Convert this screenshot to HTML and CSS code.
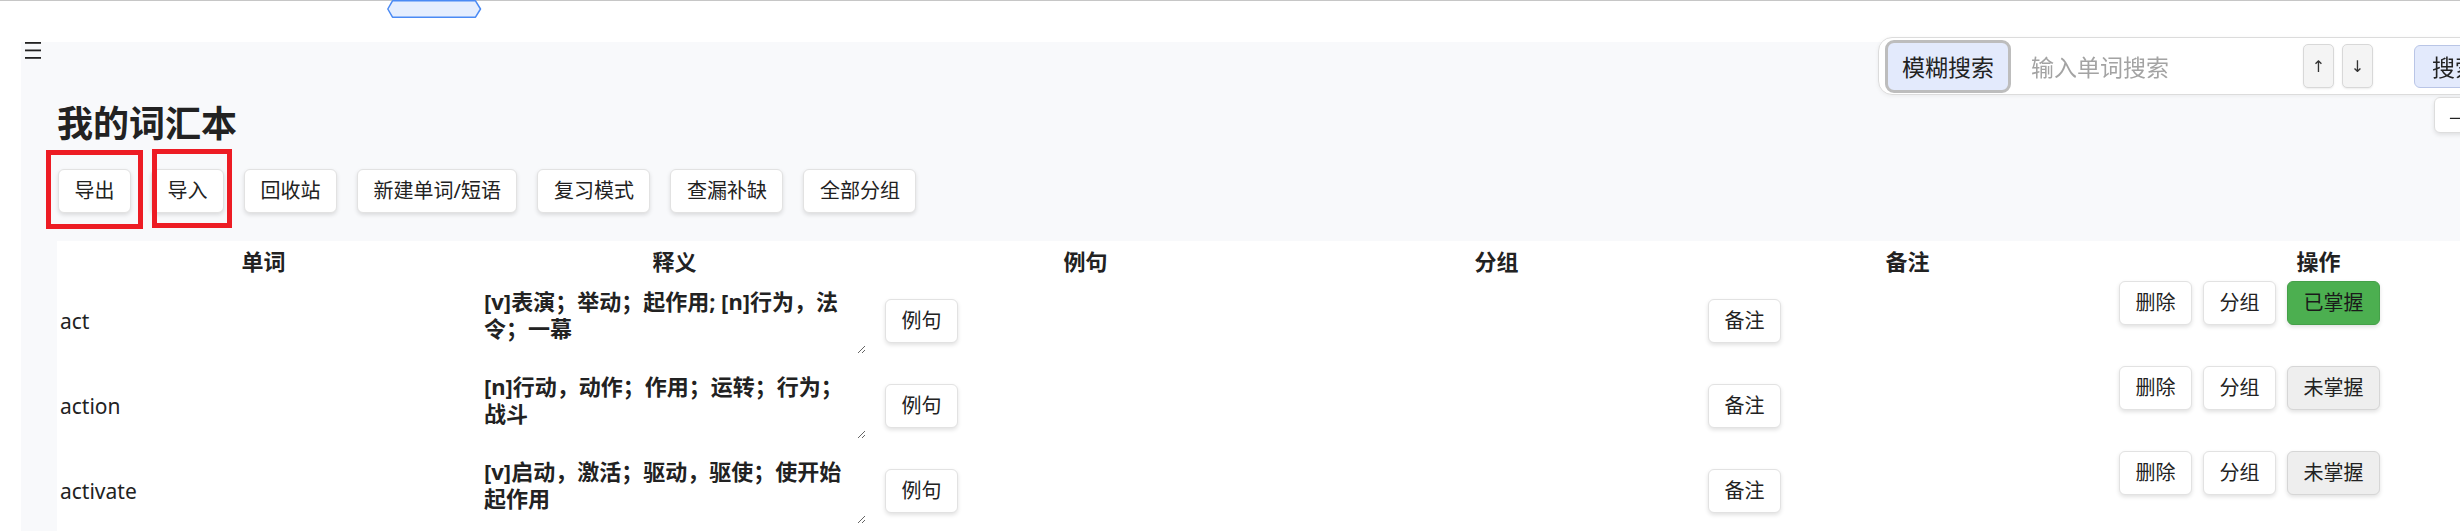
FILE: index.html
```html
<!DOCTYPE html>
<html lang="zh-CN">
<head>
<meta charset="utf-8">
<title>我的词汇本</title>
<link rel="stylesheet" href="styles.css">
</head>
<body>
<div class="topline"></div>
<svg class="drag-tab" width="95" height="19" viewBox="0 0 95 19">
  <polygon points="5.5,0.8 88.5,0.8 93.5,9 88.5,17.2 5.5,17.2 0.8,9" fill="#e5eefe" stroke="#4a8af4" stroke-width="1.5" stroke-linejoin="round"/>
</svg>
<div class="menu-toggle">
  <svg width="16" height="17" viewBox="0 0 16 17"><rect x="0" y="0" width="16" height="1.8" fill="#222"/><rect x="0" y="7.5" width="16" height="1.8" fill="#222"/><rect x="0" y="15" width="16" height="1.8" fill="#222"/></svg>
</div>

<div class="search-dock">
  <div class="search-box">
    <button class="fuzzy">模糊搜索</button>
    <input class="search-input" type="text" placeholder="输入单词搜索">
    <button class="arrow arrow-up">↑</button>
    <button class="arrow arrow-down">↓</button>
    <button class="search-btn">搜索</button>
  </div>
  <button class="collapse">—</button>
</div>

<main class="panel">
  <h1 class="title">我的词汇本</h1>
  <div class="toolbar">
    <button class="btn">导出</button>
    <button class="btn">导入</button>
    <button class="btn">回收站</button>
    <button class="btn">新建单词/短语</button>
    <button class="btn">复习模式</button>
    <button class="btn">查漏补缺</button>
    <button class="btn">全部分组</button>
  </div>
  <table class="vocab">
    <thead>
      <tr><th>单词</th><th>释义</th><th>例句</th><th>分组</th><th>备注</th><th>操作</th></tr>
    </thead>
    <tbody>
      <tr>
        <td class="word">act</td>
        <td><div class="meaning"><textarea class="meaning-text">[v]表演；举动；起作用; [n]行为，法令；一幕</textarea><button class="btn btn-example">例句</button></div></td>
        <td></td>
        <td></td>
        <td><button class="btn btn-note">备注</button></td>
        <td class="ops"><div class="actions"><button class="btn">删除</button><button class="btn">分组</button><button class="btn btn-known">已掌握</button></div></td>
      </tr>
      <tr>
        <td class="word">action</td>
        <td><div class="meaning"><textarea class="meaning-text">[n]行动，动作；作用；运转；行为；战斗</textarea><button class="btn btn-example">例句</button></div></td>
        <td></td>
        <td></td>
        <td><button class="btn btn-note">备注</button></td>
        <td class="ops"><div class="actions"><button class="btn">删除</button><button class="btn">分组</button><button class="btn btn-unknown">未掌握</button></div></td>
      </tr>
      <tr>
        <td class="word">activate</td>
        <td><div class="meaning"><textarea class="meaning-text">[v]启动，激活；驱动，驱使；使开始起作用</textarea><button class="btn btn-example">例句</button></div></td>
        <td></td>
        <td></td>
        <td><button class="btn btn-note">备注</button></td>
        <td class="ops"><div class="actions"><button class="btn">删除</button><button class="btn">分组</button><button class="btn btn-unknown">未掌握</button></div></td>
      </tr>
    </tbody>
  </table>
</main>

<div class="mark mark-export"></div>
<div class="mark mark-import"></div>
</body>
</html>
```

FILE: styles.css
```css
html, body {
  margin: 0;
  height: 531px;
  overflow: hidden;
}
body {
  background: #ffffff;
  font-family: "Noto Sans", "Noto Sans CJK SC", sans-serif;
  color: #222222;
}

.topline {
  height: 1px;
  background: #c6c6c6;
}

.drag-tab {
  position: absolute;
  left: 387px;
  top: 0;
}

.menu-toggle {
  position: fixed;
  left: 25px;
  top: 42px;
  width: 16px;
  height: 17px;
  z-index: 5;
}
.menu-toggle svg { display: block; }

/* main panel */
.panel {
  margin: 41px 0 0 21px;
  padding: 53px 0 0 36px;
  background: #f8f9fb;
  min-height: 489px;
  box-sizing: border-box;
  overflow: hidden;
}

.title {
  margin: 0;
  font: bold 36px/52px "Noto Sans CJK SC", sans-serif;
  color: #222222;
}

.toolbar {
  display: flex;
  gap: 20px;
  margin-top: 22px;
  padding-left: 1px;
}

.btn {
  box-sizing: border-box;
  height: 44px;
  padding: 7px 15.5px;
  border: 1px solid #e2e2e2;
  border-radius: 6px;
  background: #ffffff;
  color: #222222;
  font: 20px/28px "Noto Sans", "Noto Sans CJK SC", sans-serif;
  box-shadow: 0 2px 4px rgba(0, 0, 0, 0.12);
  white-space: nowrap;
  flex-shrink: 0;
}

.btn-known {
  background: #4caf50;
  border-color: #45a049;
  color: #1a1a1a;
}
.btn-unknown {
  background: #eeeeee;
  border-color: #d6d6d6;
}

/* table */
.vocab {
  table-layout: fixed;
  width: 2468px;
  border-spacing: 2px;
  background: #ffffff;
  margin-top: 28px;
}
.vocab th {
  padding: 1px;
  font: bold 22px/32px "Noto Sans CJK SC", sans-serif;
  color: #222222;
  text-align: center;
}
.vocab td {
  padding: 1px;
  vertical-align: middle;
}
.word {
  font-size: 21px;
  color: #222222;
}

.meaning {
  display: flex;
  align-items: center;
}
.meaning-text {
  box-sizing: border-box;
  flex: 0 0 394px;
  width: 394px;
  height: 68px;
  margin: 6px 0 7px 1px;
  padding: 2px 12px;
  border: none;
  outline: none;
  background: transparent;
  color: #222222;
  font: bold 22px/27px "Noto Sans", "Noto Sans CJK SC", sans-serif;
  overflow: auto;
}
.btn-example {
  margin-left: 19px;
}
.btn-note {
  margin-left: 4px;
}

.vocab td.ops {
  vertical-align: top;
}
.actions {
  display: flex;
  gap: 11px;
  margin: 1px 0 0 4px;
}

/* search dock */
.search-dock {
  position: fixed;
  top: 37px;
  left: 1878px;
  width: 626px;
  display: flex;
  flex-direction: column;
  align-items: flex-end;
  z-index: 10;
}
.search-box {
  box-sizing: border-box;
  width: 100%;
  height: 58px;
  display: flex;
  align-items: center;
  padding: 0 6px;
  border: 1px solid #dcdcdc;
  border-radius: 14px;
  background: #ffffff;
  box-shadow: 0 1px 4px rgba(0, 0, 0, 0.06);
}
.fuzzy {
  box-sizing: border-box;
  flex-shrink: 0;
  height: 53px;
  padding: 0 14px;
  border: 3px solid #bdbdbd;
  border-radius: 9px;
  background: #e3eafc;
  color: #222222;
  font: 23px/1 "Noto Sans CJK SC", sans-serif;
  white-space: nowrap;
}
.search-input {
  box-sizing: border-box;
  flex-shrink: 0;
  width: 270px;
  height: 44px;
  margin-left: 4px;
  padding: 0 16px;
  border: none;
  outline: none;
  background: transparent;
  font: 23px "Noto Sans CJK SC", sans-serif;
  color: #222222;
}
.search-input::placeholder {
  color: #a3a3a3;
}
.arrow {
  box-sizing: border-box;
  flex-shrink: 0;
  width: 31px;
  height: 44px;
  padding: 0;
  border: 1px solid #d8d8d8;
  border-radius: 5px;
  background: #f4f4f4;
  color: #333333;
  font: 16px "DejaVu Sans", sans-serif;
  box-shadow: 0 1px 2px rgba(0, 0, 0, 0.08);
}
.arrow-up { margin-left: 18px; }
.arrow-down { margin-left: 8px; }
.search-btn {
  box-sizing: border-box;
  flex-shrink: 0;
  height: 43px;
  margin-left: 41px;
  padding: 0 17px;
  border: 1px solid #b9c5e6;
  border-radius: 6px;
  background: #e3eafc;
  color: #222222;
  font: 23px/1 "Noto Sans CJK SC", sans-serif;
  white-space: nowrap;
}
.collapse {
  box-sizing: border-box;
  width: 70px;
  height: 36px;
  margin-top: 2px;
  padding: 0 14px;
  text-align: left;
  border: 1px solid #dddddd;
  border-radius: 6px;
  background: #ffffff;
  color: #222222;
  font: 20px "Noto Sans CJK SC", sans-serif;
  box-shadow: 0 2px 4px rgba(0, 0, 0, 0.1);
}

/* annotation boxes */
.mark {
  position: absolute;
  box-sizing: border-box;
  border: 5px solid #ed1c24;
  z-index: 20;
}
.mark-export {
  left: 46px;
  top: 150px;
  width: 97px;
  height: 79px;
}
.mark-import {
  left: 152px;
  top: 149px;
  width: 80px;
  height: 79px;
}
```
